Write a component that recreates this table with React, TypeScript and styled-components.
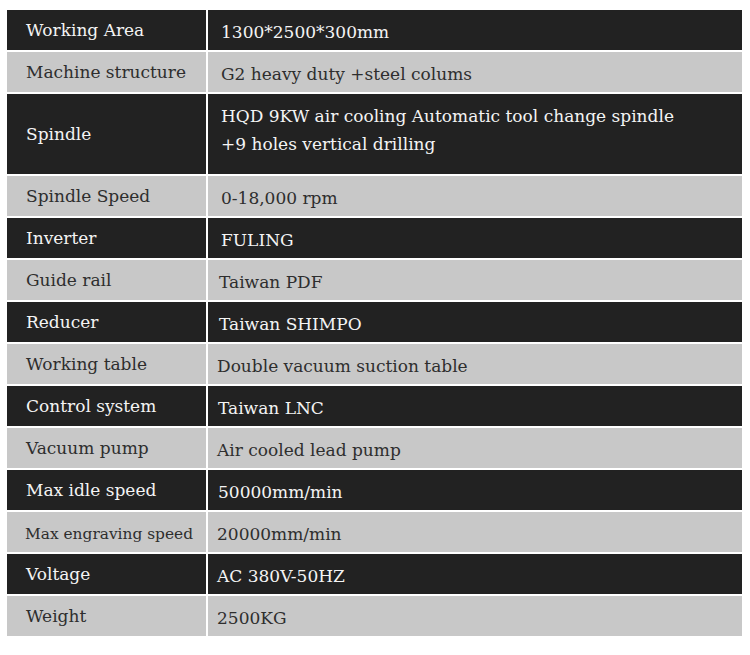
import React from "react";
import styled, { createGlobalStyle } from "styled-components";

const GlobalStyle = createGlobalStyle`
  html, body {
    margin: 0;
    padding: 0;
    background: #ffffff;
  }
  body {
    font-family: "DejaVu Serif", "Liberation Serif", serif;
  }
`;

const Table = styled.div`
  width: 735px;
  margin: 10px 0 0 7px;
  display: flex;
  flex-direction: column;
  gap: 2px;
`;

const Row = styled.div<{ $dark: boolean; $tall?: boolean }>`
  display: grid;
  grid-template-columns: 199px 1fr;
  column-gap: 2px;
  height: ${(p) => (p.$tall ? "80px" : "40px")};
  color: ${(p) => (p.$dark ? "#f4f4f4" : "#2e2e2e")};
`;

const Cell = styled.div<{ $dark: boolean }>`
  background: ${(p) => (p.$dark ? "#222222" : "#c8c8c8")};
  display: flex;
  align-items: center;
  font-size: 17px;
  line-height: 28px;
`;

const Label = styled(Cell)<{ $small?: boolean }>`
  padding-left: ${(p) => (p.$small ? "18px" : "19px")};
  font-size: ${(p) => (p.$small ? "15.4px" : "17px")};
  padding-top: ${(p) => (p.$small ? "3px" : "0")};
`;

const Value = styled(Cell)<{ $inset: number }>`
  padding-left: ${(p) => p.$inset}px;
  padding-top: 3px;
`;

const TallValue = styled(Value)`
  align-items: flex-start;
  padding-top: 8px;
`;

type Spec = {
  label: string;
  value: string[];
  inset: number;
  small?: boolean;
};

const specs: Spec[] = [
  { label: "Working Area", value: ["1300*2500*300mm"], inset: 13 },
  { label: "Machine structure", value: ["G2 heavy duty +steel colums"], inset: 13 },
  {
    label: "Spindle",
    value: [
      "HQD 9KW air cooling Automatic tool change spindle",
      "+9 holes vertical drilling",
    ],
    inset: 13,
  },
  { label: "Spindle Speed", value: ["0-18,000 rpm"], inset: 13 },
  { label: "Inverter", value: ["FULING"], inset: 13 },
  { label: "Guide rail", value: ["Taiwan PDF"], inset: 11 },
  { label: "Reducer", value: ["Taiwan SHIMPO"], inset: 11 },
  { label: "Working table", value: ["Double vacuum suction table"], inset: 9 },
  { label: "Control system", value: ["Taiwan LNC"], inset: 10 },
  { label: "Vacuum pump", value: ["Air cooled lead pump"], inset: 9 },
  { label: "Max idle speed", value: ["50000mm/min"], inset: 10 },
  { label: "Max engraving speed", value: ["20000mm/min"], inset: 9, small: true },
  { label: "Voltage", value: ["AC 380V-50HZ"], inset: 9 },
  { label: "Weight", value: ["2500KG"], inset: 9 },
];

export default function App() {
  return (
    <>
      <GlobalStyle />
      <Table>
        {specs.map((s, i) => {
          const dark = i % 2 === 0;
          const tall = s.value.length > 1;
          return (
            <Row key={s.label} $dark={dark} $tall={tall}>
              <Label $dark={dark} $small={s.small}>
                {s.label}
              </Label>
              {tall ? (
                <TallValue $dark={dark} $inset={s.inset}>
                  <div>
                    {s.value.map((line) => (
                      <div key={line}>{line}</div>
                    ))}
                  </div>
                </TallValue>
              ) : (
                <Value $dark={dark} $inset={s.inset}>
                  {s.value[0]}
                </Value>
              )}
            </Row>
          );
        })}
      </Table>
    </>
  );
}
